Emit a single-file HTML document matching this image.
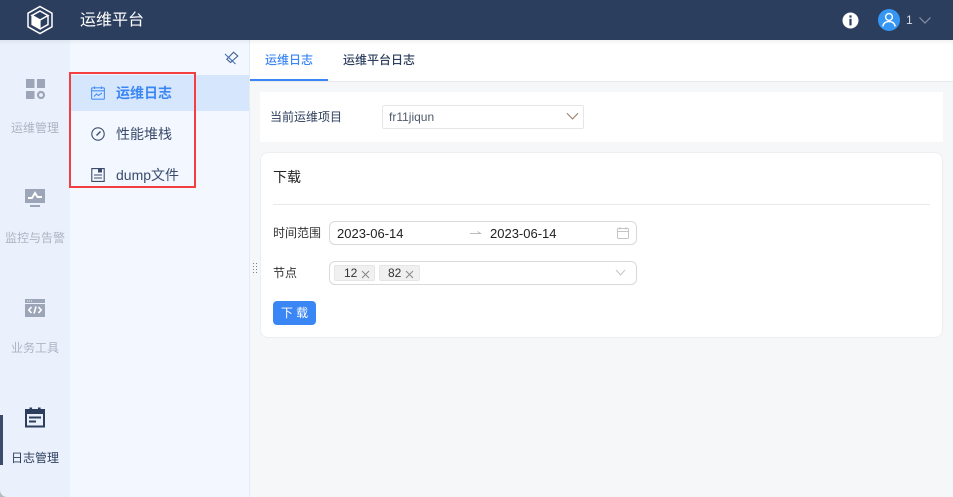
<!DOCTYPE html>
<html lang="zh">
<head>
<meta charset="utf-8">
<title>运维平台</title>
<style>
html,body{margin:0;padding:0;width:953px;height:497px;overflow:hidden;background:#f6f7f9;font-family:"Liberation Sans","Noto Sans CJK SC",sans-serif;font-size:12px;color:#2c3e5d}
.a{position:absolute;white-space:nowrap;line-height:1}
svg{position:absolute;display:block}
</style>
</head>
<body>
<!-- rail + subnav backgrounds -->
<div class="a" style="left:0;top:40px;width:70px;height:457px;background:#ebf1fc"></div>
<div class="a" style="left:70px;top:40px;width:179px;height:457px;background:#f3f7ff"></div>
<div class="a" style="left:249px;top:40px;width:1px;height:457px;background:#e6eaf2"></div>

<!-- header -->
<div class="a" style="left:0;top:0;width:953px;height:40px;background:#2c3e5d"></div>
<svg style="left:26px;top:5px" width="28" height="30" viewBox="0 0 28 30">
  <path d="M14 1.5 26 8.2V21.8L14 28.5 2 21.8V8.2Z" fill="none" stroke="#fff" stroke-width="1.5"/>
  <path d="M14 6 22 10.5 14 15 6 10.5Z" fill="none" stroke="#fff" stroke-width="1.5"/>
  <path d="M6 10.5 14 15V24L6 19.5Z" fill="#fff" stroke="#fff" stroke-width="1.2"/>
  <path d="M22 10.5V19.5L14 24" fill="none" stroke="#fff" stroke-width="1.5"/>
</svg>
<div class="a" style="left:80px;top:13px;font-size:16px;color:#fff">运维平台</div>
<svg style="left:842px;top:12px" width="17" height="17" viewBox="0 0 17 17">
  <circle cx="8.5" cy="8.5" r="8" fill="#fff"/>
  <rect x="7.4" y="3.4" width="2.2" height="2.2" fill="#2c3e5d"/>
  <rect x="7.4" y="6.8" width="2.2" height="6.6" fill="#2c3e5d"/>
</svg>
<svg style="left:878px;top:9px" width="22" height="22" viewBox="0 0 22 22">
  <circle cx="11" cy="11" r="11" fill="#3596f5"/>
  <circle cx="11" cy="8" r="3.4" fill="none" stroke="#fff" stroke-width="1.4"/>
  <path d="M4.8 17.5C5.4 14 8 12.6 11 12.6S16.6 14 17.2 17.5" fill="none" stroke="#fff" stroke-width="1.4"/>
</svg>
<div class="a" style="left:906px;top:14px;font-size:12px;color:#d6dbe5">1</div>
<svg style="left:918px;top:16px" width="14" height="9" viewBox="0 0 14 9"><path d="M1.5 1.5 7 7 12.5 1.5" fill="none" stroke="#8592a8" stroke-width="1.2"/></svg>

<!-- rail -->
<svg style="left:24px;top:77px" width="22" height="22" viewBox="0 0 22 22" fill="#9da5b8">
  <rect x="2" y="2" width="8.5" height="9"/>
  <rect x="13" y="2" width="8" height="9"/>
  <rect x="2" y="14" width="8.5" height="8"/>
  <circle cx="17" cy="18" r="3" fill="none" stroke="#9da5b8" stroke-width="2.2"/>
</svg>
<div class="a" style="left:11px;top:122px;color:#aeb3c1">运维管理</div>

<svg style="left:24px;top:187px" width="22" height="22" viewBox="0 0 22 22">
  <rect x="1" y="2" width="20" height="14" fill="#9da5b8"/>
  <path d="M4 11H8L11 6 13.5 10H18" fill="none" stroke="#fff" stroke-width="1.9"/>
  <rect x="6" y="18" width="10" height="2" fill="#9da5b8"/>
</svg>
<div class="a" style="left:5px;top:232px;color:#aeb3c1">监控与告警</div>

<svg style="left:24px;top:298px" width="22" height="22" viewBox="0 0 22 22">
  <rect x="1" y="1" width="20" height="18" fill="#9da5b8"/>
  <rect x="1" y="5" width="20" height="1" fill="#ebf1fc"/>
  <path d="M3 3H9" stroke="#ebf1fc" stroke-width="1" stroke-dasharray="1 1"/>
  <path d="M7.5 9 4.8 12 7.5 15M14.5 9 17.2 12 14.5 15M12 8.5 10 15.5" fill="none" stroke="#fff" stroke-width="1.6"/>
</svg>
<div class="a" style="left:11px;top:342px;color:#aeb3c1">业务工具</div>

<div class="a" style="left:0;top:415px;width:3px;height:50px;background:#3b4c6b"></div>
<svg style="left:24px;top:407px" width="22" height="22" viewBox="0 0 22 22">
  <rect x="2" y="3" width="18" height="16.5" fill="#ebf1fc" stroke="#2c3e5d" stroke-width="2"/>
  <rect x="2" y="3" width="18" height="4" fill="#2c3e5d"/>
  <rect x="5.5" y="0.5" width="2.6" height="4" fill="#2c3e5d"/>
  <rect x="14" y="0.5" width="2.6" height="4" fill="#2c3e5d"/>
  <rect x="5" y="9.5" width="12" height="2" fill="#2c3e5d"/>
  <rect x="5" y="13.5" width="7" height="2" fill="#2c3e5d"/>
</svg>
<div class="a" style="left:11px;top:452px;color:#2c3e5d">日志管理</div>
<div class="a" style="left:0;top:490px;width:7px;height:7px;background:#b9b9b9;clip-path:path('M0 0A7 7 0 0 0 7 7H0Z')"></div>

<!-- subnav -->
<svg style="left:224px;top:51px" width="15" height="14" viewBox="0 0 15 14" fill="none" stroke="#44608f" stroke-width="1.1">
  <path d="M9.5 1.2 13.8 5 11 7.5 6.5 11.5 2.8 8.2Z"/>
  <path d="M1 3 11.5 13" stroke="#3f6fb0"/>
</svg>
<div class="a" style="left:71px;top:75px;width:178px;height:36px;background:#d5e6fd"></div>
<svg style="left:91px;top:86px" width="14" height="14" viewBox="0 0 14 14" fill="none" stroke="#4a90f7" stroke-width="1.1">
  <rect x=".6" y="1.8" width="12.8" height="11.4" rx="1"/>
  <path d="M.6 4.8H13.4M3.5 .4V3M10.5 .4V3"/>
  <path d="M3 10.5 5.5 8 7.5 9.5 11 7"/>
</svg>
<div class="a" style="left:116px;top:86px;font-size:14px;font-weight:700;color:#3b86f5">运维日志</div>
<svg style="left:91px;top:127px" width="14" height="14" viewBox="0 0 14 14" fill="none" stroke="#3b4c6b" stroke-width="1.1">
  <circle cx="7" cy="7" r="6.2"/>
  <path d="M5.5 8.5 9.5 4.5" stroke-width="1.4"/>
</svg>
<div class="a" style="left:116px;top:127px;font-size:14px;color:#3b4c6b">性能堆栈</div>
<svg style="left:91px;top:168px" width="14" height="14" viewBox="0 0 14 14" fill="none" stroke="#3b4c6b" stroke-width="1.1">
  <path d="M.8.6H13.2V13.4H.8Z"/>
  <path d="M3 7H11M3 10H11"/>
  <rect x="7" y="1" width="4" height="3.5" fill="#3b4c6b" stroke="none"/>
</svg>
<div class="a" style="left:116px;top:168px;font-size:14px;color:#3b4c6b">dump文件</div>
<div class="a" style="left:69px;top:72px;width:123px;height:112px;border:2px solid #f33f3f"></div>

<!-- splitter dots -->
<svg style="left:253px;top:262px" width="5" height="14" viewBox="0 0 5 14" fill="#6f7f9a">
  <rect x="0" y="1" width="1" height="1"/><rect x="3" y="1" width="1" height="1"/>
  <rect x="0" y="4" width="1" height="1"/><rect x="3" y="4" width="1" height="1"/>
  <rect x="0" y="7" width="1" height="1"/><rect x="3" y="7" width="1" height="1"/>
  <rect x="0" y="10" width="1" height="1"/><rect x="3" y="10" width="1" height="1"/>
</svg>

<!-- tabs -->
<div class="a" style="left:250px;top:40px;width:703px;height:41px;background:#fff;border-bottom:1px solid #e8eaee"></div>
<div class="a" style="left:265px;top:54px;color:#3b86f5;font-weight:500">运维日志</div>
<div class="a" style="left:343px;top:54px;color:#2c3e5d;font-weight:500">运维平台日志</div>
<div class="a" style="left:250px;top:79px;width:78px;height:2px;background:#3b86f5"></div>

<!-- project panel -->
<div class="a" style="left:260px;top:92px;width:683px;height:50px;background:#fff"></div>
<div class="a" style="left:270px;top:111px;color:#2c3e5d">当前运维项目</div>
<div class="a" style="left:382px;top:105px;width:200px;height:22px;background:#fff;border:1px solid #e6e6ea;border-radius:2px"></div>
<div class="a" style="left:389px;top:111px;color:#4f5a6c">fr11jiqun</div>
<svg style="left:566px;top:112px" width="13" height="9" viewBox="0 0 13 9"><path d="M1 1.2 6.5 7 12 1.2" fill="none" stroke="#9a7f6a" stroke-width="1.1"/></svg>

<!-- card -->
<div class="a" style="left:260px;top:152px;width:681px;height:184px;background:#fff;border:1px solid #eceef2;border-radius:8px"></div>
<div class="a" style="left:273px;top:170px;font-size:14px;color:#222">下载</div>
<div class="a" style="left:273px;top:204px;width:657px;height:1px;background:#e9e9e9"></div>

<div class="a" style="left:273px;top:227px;color:#333">时间范围</div>
<div class="a" style="left:329px;top:221px;width:306px;height:22px;border:1px solid #d9d9d9;border-radius:6px"></div>
<div class="a" style="left:337px;top:227px;font-size:13px;color:#222">2023-06-14</div>
<svg style="left:469px;top:229px" width="13" height="8" viewBox="0 0 13 8"><path d="M1 4.5H11.5L8.5 2.5" fill="none" stroke="#bbb" stroke-width="1"/></svg>
<div class="a" style="left:490px;top:227px;font-size:13px;color:#222">2023-06-14</div>
<svg style="left:617px;top:227px" width="12" height="12" viewBox="0 0 12 12" fill="none" stroke="#c4c4c4" stroke-width="1">
  <rect x=".5" y="1.5" width="11" height="10" rx="1"/><path d="M.5 4.5H11.5M3 0V2.5M9 0V2.5"/>
</svg>

<div class="a" style="left:273px;top:267px;color:#333">节点</div>
<div class="a" style="left:329px;top:261px;width:306px;height:22px;border:1px solid #d9d9d9;border-radius:6px"></div>
<div class="a" style="left:334px;top:265px;width:39px;height:14px;background:#f0f0f0;border:1px solid #e6e6e6;border-radius:2px"></div>
<div class="a" style="left:344px;top:267px;color:#333">12</div>
<svg style="left:361px;top:270px" width="9" height="9" viewBox="0 0 9 9"><path d="M1 1 8 8M8 1 1 8" stroke="#888" stroke-width="1"/></svg>
<div class="a" style="left:379px;top:265px;width:39px;height:14px;background:#f0f0f0;border:1px solid #e6e6e6;border-radius:2px"></div>
<div class="a" style="left:388px;top:267px;color:#333">82</div>
<svg style="left:405px;top:270px" width="9" height="9" viewBox="0 0 9 9"><path d="M1 1 8 8M8 1 1 8" stroke="#888" stroke-width="1"/></svg>
<svg style="left:615px;top:269px" width="11" height="7" viewBox="0 0 11 7"><path d="M1 1 5.5 6 10 1" fill="none" stroke="#c4c4c4" stroke-width="1"/></svg>

<div class="a" style="left:273px;top:301px;width:43px;height:24px;background:#3b86f5;border-radius:4px;color:#fff;text-align:center;line-height:24px;font-size:12px">下 载</div>

<!-- soft shadow below header -->
<div class="a" style="left:0;top:40px;width:953px;height:5px;background:linear-gradient(rgba(0,0,0,.05),rgba(0,0,0,0))"></div>
</body>
</html>
